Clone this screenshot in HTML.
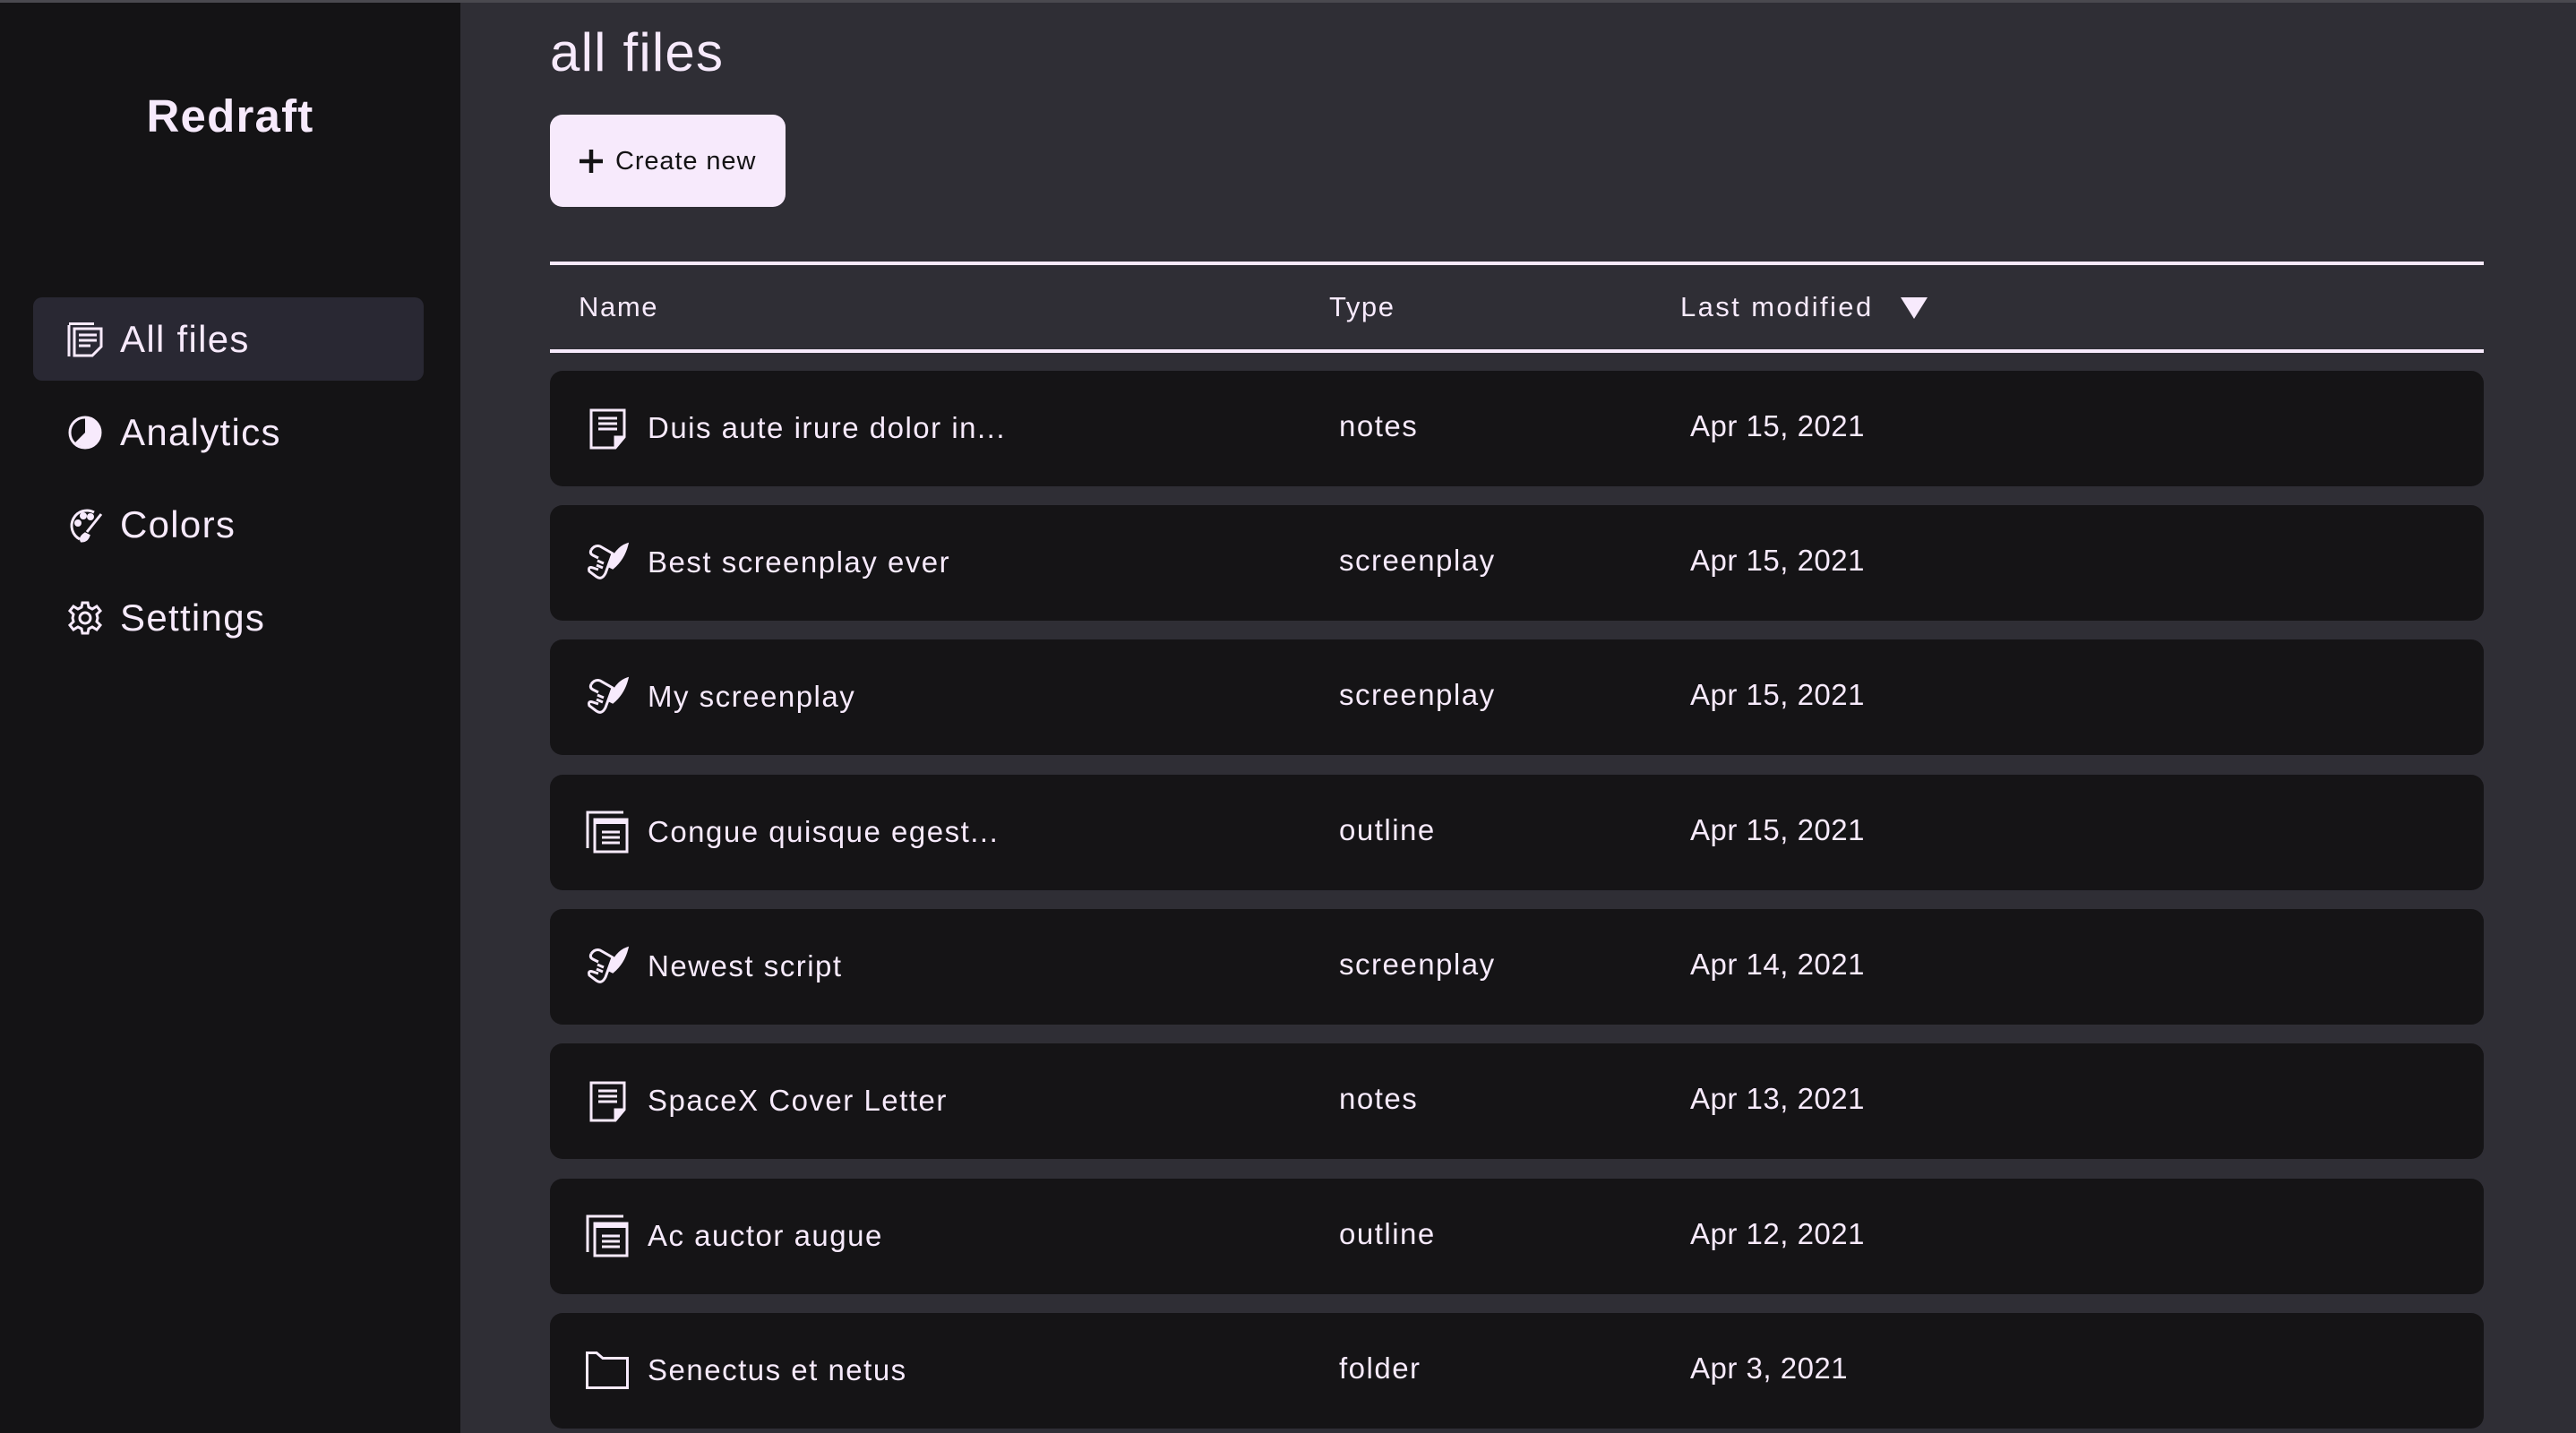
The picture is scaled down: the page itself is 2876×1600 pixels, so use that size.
<!DOCTYPE html>
<html><head><meta charset="utf-8"><style>
*{margin:0;padding:0;box-sizing:border-box}
body{width:2876px;height:1600px;background:#2f2e35;font-family:"Liberation Sans",sans-serif;color:#f7eafc;position:relative;overflow:hidden}
.top{position:absolute;left:0;top:0;width:2876px;height:3px;background:#4a494f}
.side{position:absolute;left:0;top:3px;width:514px;height:1597px;background:#141315}
.logo{position:absolute;left:0;width:514px;top:97px;text-align:center;font-weight:bold;font-size:51px;letter-spacing:1.2px}
.nav{position:absolute;left:37px;width:436px;height:93px;border-radius:10px;font-size:42px;letter-spacing:1.3px}
.nav.act{background:#292833}
.nav svg{position:absolute;left:38px;top:27px}
.nav span{position:absolute;left:97px;top:23px}
h1{position:absolute;left:614px;top:24px;font-weight:normal;font-size:60px;letter-spacing:1.2px}
.btn{position:absolute;left:614px;top:128px;width:263px;height:103px;background:#f7eafc;border-radius:14px;color:#141315;font-size:29px;letter-spacing:.9px}
.btn svg{position:absolute;left:32px;top:38px}
.btn span{position:absolute;left:73px;top:36px}
.line{position:absolute;left:614px;width:2159px;height:4px;background:#f7eafc}
.hd{position:absolute;top:325px;font-size:31px;letter-spacing:1.6px}
.row{position:absolute;left:614px;width:2159px;height:129px;background:#151416;border-radius:14px;font-size:33px;letter-spacing:1.5px}
.row svg{position:absolute;left:40px;top:40px}
.row .n{position:absolute;left:109px;top:45px}
.row .t{position:absolute;left:881px;top:43px}
.row .d{position:absolute;left:1273px;top:43px;letter-spacing:.5px}
</style></head><body>
<div class="top"></div>
<div class="side">
<div class="logo">Redraft</div>
<div class="nav act" style="top:329px"><svg width="40" height="40" viewBox="0 0 40 40" fill="none" stroke="#f7eafc" stroke-width="3"><path d="M2 4V39M2 2.5H30"/><path d="M8 8H38V28L28 38H8Z"/><path d="M13 15H33M13 21H33M13 27H26"/></svg><span>All files</span></div>
<div class="nav" style="top:433px"><svg width="40" height="40" viewBox="0 0 40 40"><circle cx="20" cy="20" r="17" fill="none" stroke="#f7eafc" stroke-width="3"/><path d="M20 3A17 17 0 0 1 20 37 L8 32 L20 20Z" fill="#f7eafc"/></svg><span>Analytics</span></div>
<div class="nav" style="top:536px"><svg width="40" height="40" viewBox="0 0 40 40" fill="none" stroke="#f7eafc" stroke-width="3"><path d="M30 6A17 17 0 1 0 14 36"/><circle cx="12" cy="18" r="2.5" fill="#f7eafc"/><circle cx="18" cy="10" r="2.5" fill="#f7eafc"/><circle cx="26" cy="11" r="2.5" fill="#f7eafc"/><path d="M38 8L22 28M20 30Q14 34 16 38Q22 38 24 32Z" fill="#f7eafc"/></svg><span>Colors</span></div>
<div class="nav" style="top:640px"><svg width="40" height="40" viewBox="0 0 40 40" fill="none" stroke="#f7eafc" stroke-width="3"><circle cx="20" cy="20" r="6"/><path d="M17 3H23L24 8L28 10L33 7L37 12L33 16L34 20L33 24L37 28L33 33L28 30L24 32L23 37H17L16 32L12 30L7 33L3 28L7 24L6 20L7 16L3 12L7 7L12 10L16 8Z"/></svg><span>Settings</span></div>
</div>
<h1>all files</h1>
<div class="btn"><svg width="28" height="28" viewBox="0 0 28 28"><path d="M14 1V27M1 14H27" stroke="#141315" stroke-width="4.5"/></svg><span>Create new</span></div>
<div class="line" style="top:292px"></div>
<div class="line" style="top:390px"></div>
<div class="hd" style="left:646px">Name</div>
<div class="hd" style="left:1484px">Type</div>
<div class="hd" style="left:1876px;letter-spacing:2.4px">Last modified</div>
<svg style="position:absolute;left:2122px;top:332px" width="30" height="26" viewBox="0 0 30 26"><path d="M0 0H30L15 24Z" fill="#f7eafc"/></svg>

<div class="row" style="top:414px"><svg width="48" height="48" viewBox="0 0 48 48" fill="none" stroke="#f7eafc" stroke-width="3"><path d="M6 4H43V34L33 46H6Z"/><path d="M43 34H33V46" fill="#f7eafc"/><path d="M14 13H35M14 19H35M14 25H35"/></svg><span class="n">Duis aute irure dolor in...</span><span class="t">notes</span><span class="d">Apr 15, 2021</span></div>

<div class="row" style="top:564px"><svg width="48" height="48" viewBox="0 0 48 48" fill="none" stroke="#f7eafc" stroke-width="3"><path d="M6 10Q10 4 16 6L30 14L22 36Q18 44 12 40L4 34Q2 28 8 30L14 32"/><path d="M6 10Q4 14 8 16L14 19"/><path d="M13 22L20 25M12 27L19 30"/><path d="M46 4Q34 8 26 28L30 30Q42 20 46 4Z" fill="#f7eafc"/></svg><span class="n">Best screenplay ever</span><span class="t">screenplay</span><span class="d">Apr 15, 2021</span></div>

<div class="row" style="top:714px"><svg width="48" height="48" viewBox="0 0 48 48" fill="none" stroke="#f7eafc" stroke-width="3"><path d="M6 10Q10 4 16 6L30 14L22 36Q18 44 12 40L4 34Q2 28 8 30L14 32"/><path d="M6 10Q4 14 8 16L14 19"/><path d="M13 22L20 25M12 27L19 30"/><path d="M46 4Q34 8 26 28L30 30Q42 20 46 4Z" fill="#f7eafc"/></svg><span class="n">My screenplay</span><span class="t">screenplay</span><span class="d">Apr 15, 2021</span></div>

<div class="row" style="top:865px"><svg width="48" height="48" viewBox="0 0 48 48" fill="none" stroke="#f7eafc" stroke-width="3"><path d="M2 42V2H42"/><path d="M10 10H46V46H10Z"/><path d="M10 12H46" stroke-width="6"/><path d="M18 24H38M18 30H38M18 36H38"/></svg><span class="n">Congue quisque egest...</span><span class="t">outline</span><span class="d">Apr 15, 2021</span></div>

<div class="row" style="top:1015px"><svg width="48" height="48" viewBox="0 0 48 48" fill="none" stroke="#f7eafc" stroke-width="3"><path d="M6 10Q10 4 16 6L30 14L22 36Q18 44 12 40L4 34Q2 28 8 30L14 32"/><path d="M6 10Q4 14 8 16L14 19"/><path d="M13 22L20 25M12 27L19 30"/><path d="M46 4Q34 8 26 28L30 30Q42 20 46 4Z" fill="#f7eafc"/></svg><span class="n">Newest script</span><span class="t">screenplay</span><span class="d">Apr 14, 2021</span></div>

<div class="row" style="top:1165px"><svg width="48" height="48" viewBox="0 0 48 48" fill="none" stroke="#f7eafc" stroke-width="3"><path d="M6 4H43V34L33 46H6Z"/><path d="M43 34H33V46" fill="#f7eafc"/><path d="M14 13H35M14 19H35M14 25H35"/></svg><span class="n">SpaceX Cover Letter</span><span class="t">notes</span><span class="d">Apr 13, 2021</span></div>

<div class="row" style="top:1316px"><svg width="48" height="48" viewBox="0 0 48 48" fill="none" stroke="#f7eafc" stroke-width="3"><path d="M2 42V2H42"/><path d="M10 10H46V46H10Z"/><path d="M10 12H46" stroke-width="6"/><path d="M18 24H38M18 30H38M18 36H38"/></svg><span class="n">Ac auctor augue</span><span class="t">outline</span><span class="d">Apr 12, 2021</span></div>

<div class="row" style="top:1466px"><svg width="48" height="48" viewBox="0 0 48 48" fill="none" stroke="#f7eafc" stroke-width="3"><path d="M1.5 4.5H12L19 10.5H46.5V43.5H1.5Z"/></svg><span class="n">Senectus et netus</span><span class="t">folder</span><span class="d">Apr 3, 2021</span></div>
</body></html>
